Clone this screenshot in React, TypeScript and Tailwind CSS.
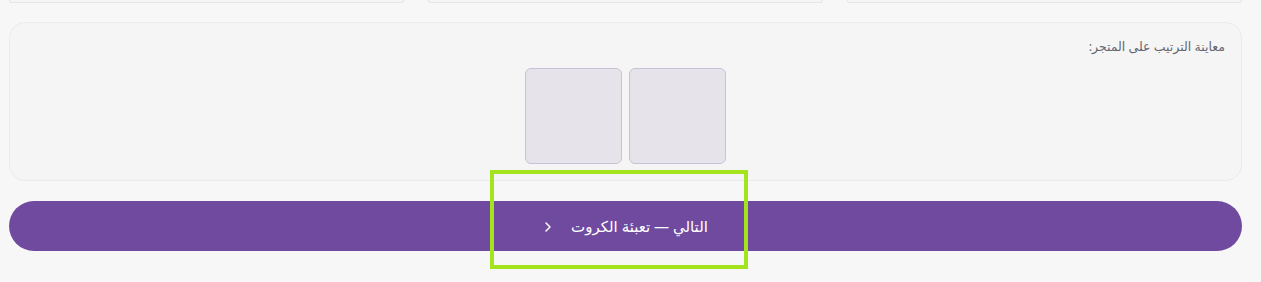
import React from 'react';

const tiles = [1, 2];

const App: React.FC = () => {
  return (
    <div
      dir="rtl"
      className="relative min-h-[282px] w-full bg-[#f7f7f7] pl-[9px] pr-[19px]"
      style={{ fontFamily: '"Noto Sans", "DejaVu Sans", sans-serif' }}
    >
      {/* bottoms of the cards above, scrolled out of view */}
      <div className="grid grid-cols-3 gap-6">
        <div className="h-[3px] rounded-b-xl border-x border-b border-[#e4e4ea] bg-[#f5f5f5]" />
        <div className="h-[3px] rounded-b-xl border-x border-b border-[#e4e4ea] bg-[#f5f5f5]" />
        <div className="h-[3px] rounded-b-xl border-x border-b border-[#e4e4ea] bg-[#f5f5f5]" />
      </div>

      {/* preview card */}
      <div className="mt-[19px] rounded-2xl border border-[#ebebeb] bg-[#f5f5f5] px-4 pt-[14px] pb-4">
        <p className="text-[12.5px] leading-5 text-[#666670]">معاينة الترتيب على المتجر:</p>
        <div className="mt-[11px] flex justify-center gap-[7px]">
          {tiles.map((t) => (
            <div
              key={t}
              className="h-[96px] w-[97px] rounded-md border border-[#c9c2d6] bg-[#e6e4ea]"
            />
          ))}
        </div>
      </div>

      {/* next button */}
      <button className="mt-5 flex h-[50px] w-full items-center justify-center gap-[18px] rounded-full bg-[#6f4a9f] text-white">
        <span className="text-[15px] leading-6">التالي — تعبئة الكروت</span>
        <svg width="10" height="12" viewBox="0 0 10 12" fill="none" className="mt-[1px]">
          <path d="M3 2 L7 6 L3 10" stroke="white" strokeWidth="1.5" strokeLinecap="round" strokeLinejoin="round" />
        </svg>
      </button>

      {/* highlight outline over the button */}
      <div className="pointer-events-none absolute left-[490px] top-[170px] h-[99px] w-[258px] border-4 border-[#a3e41c]" />
    </div>
  );
};

export default App;
